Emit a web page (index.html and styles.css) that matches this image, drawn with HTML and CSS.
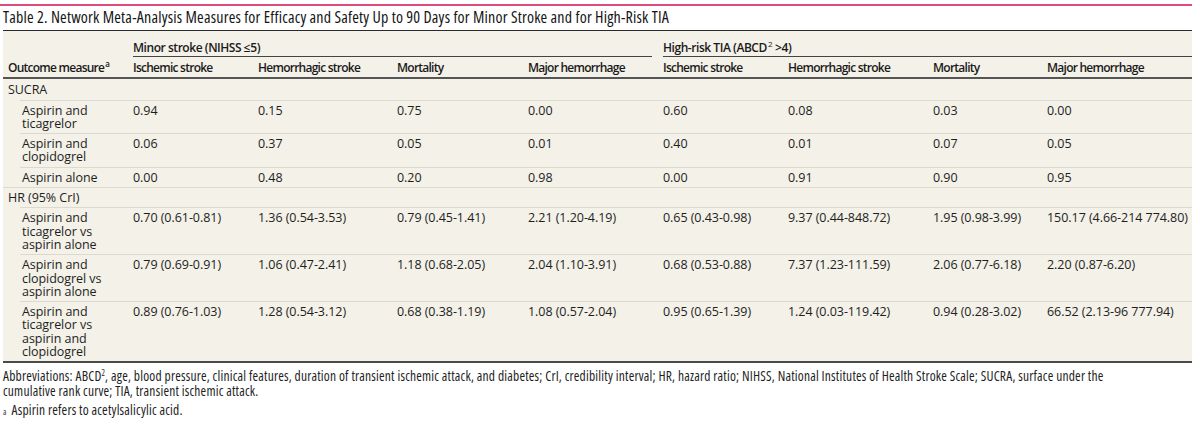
FILE: index.html
```html
<!DOCTYPE html>
<html lang="en">
<head>
<meta charset="utf-8">
<title>Table 2</title>
<link rel="stylesheet" href="styles.css">
</head>
<body>
<div class="page">
  <div class="rule"></div>
  <h1 class="title">Table 2. Network Meta-Analysis Measures for Efficacy and Safety Up to 90 Days for Minor Stroke and for High-Risk TIA</h1>
  <table class="data">
    <colgroup>
      <col class="w0"><col class="w1"><col class="w2"><col class="w3"><col class="w4"><col class="w5"><col class="w6"><col class="w7"><col class="w8">
    </colgroup>
    <thead>
      <tr class="groups">
        <th rowspan="2" class="outcome">Outcome measure<sup>a</sup></th>
        <th colspan="4" class="group"><div class="group-label">Minor stroke (NIHSS ≤5)</div></th>
        <th colspan="4" class="group last"><div class="group-label">High-risk TIA (ABCD<sup class="sq">2</sup> &gt;4)</div></th>
      </tr>
      <tr class="cols">
        <th>Ischemic stroke</th>
        <th>Hemorrhagic stroke</th>
        <th>Mortality</th>
        <th>Major hemorrhage</th>
        <th>Ischemic stroke</th>
        <th>Hemorrhagic stroke</th>
        <th>Mortality</th>
        <th>Major hemorrhage</th>
      </tr>
    </thead>
    <tbody>
      <tr class="cat"><td colspan="9">SUCRA</td></tr>
      <tr class="sub">
        <td>Aspirin and ticagrelor</td><td>0.94</td><td>0.15</td><td>0.75</td><td>0.00</td><td>0.60</td><td>0.08</td><td>0.03</td><td>0.00</td>
      </tr>
      <tr class="sub">
        <td>Aspirin and clopidogrel</td><td>0.06</td><td>0.37</td><td>0.05</td><td>0.01</td><td>0.40</td><td>0.01</td><td>0.07</td><td>0.05</td>
      </tr>
      <tr class="sub">
        <td>Aspirin alone</td><td>0.00</td><td>0.48</td><td>0.20</td><td>0.98</td><td>0.00</td><td>0.91</td><td>0.90</td><td>0.95</td>
      </tr>
      <tr class="cat sep"><td colspan="9">HR (95% CrI)</td></tr>
      <tr class="sub">
        <td>Aspirin and ticagrelor vs aspirin alone</td><td>0.70 (0.61-0.81)</td><td>1.36 (0.54-3.53)</td><td>0.79 (0.45-1.41)</td><td>2.21 (1.20-4.19)</td><td>0.65 (0.43-0.98)</td><td>9.37 (0.44-848.72)</td><td>1.95 (0.98-3.99)</td><td>150.17 (4.66-214 774.80)</td>
      </tr>
      <tr class="sub">
        <td>Aspirin and clopidogrel vs aspirin alone</td><td>0.79 (0.69-0.91)</td><td>1.06 (0.47-2.41)</td><td>1.18 (0.68-2.05)</td><td>2.04 (1.10-3.91)</td><td>0.68 (0.53-0.88)</td><td>7.37 (1.23-111.59)</td><td>2.06 (0.77-6.18)</td><td>2.20 (0.87-6.20)</td>
      </tr>
      <tr class="sub">
        <td>Aspirin and ticagrelor vs aspirin and clopidogrel</td><td>0.89 (0.76-1.03)</td><td>1.28 (0.54-3.12)</td><td>0.68 (0.38-1.19)</td><td>1.08 (0.57-2.04)</td><td>0.95 (0.65-1.39)</td><td>1.24 (0.03-119.42)</td><td>0.94 (0.28-3.02)</td><td>66.52 (2.13-96 777.94)</td>
      </tr>
    </tbody>
  </table>
  <div class="notes">
    <p class="abbr">Abbreviations: ABCD<sup class="sq">2</sup>, age, blood pressure, clinical features, duration of transient ischemic attack, and diabetes; CrI, credibility interval; HR, hazard ratio; NIHSS, National Institutes of Health Stroke Scale; SUCRA, surface under the<br>cumulative rank curve; TIA, transient ischemic attack.</p>
    <p class="fn"><sup class="mark">a</sup><span>Aspirin refers to acetylsalicylic acid.</span></p>
  </div>
</div>
</body>
</html>
```
FILE: styles.css
```css
html, body {
  margin: 0;
  padding: 0;
  background: #ffffff;
}

body {
  font-family: "Open Sans", "Liberation Sans", Arial, sans-serif;
  color: #1e1e1e;
}

.page {
  width: 1192px;
  padding-top: 4px;
}

.rule {
  height: 2px;
  background: #e04a7b;
}

.title {
  margin: 0 0 4px 3px;
  padding-top: 3px;
  font-size: 16px;
  font-stretch: 75%;
  letter-spacing: 0.2px;
  line-height: 17px;
  font-weight: 500;
  color: #151515;
}

.data {
  margin-left: 3px;
  width: 1189px;
  table-layout: fixed;
  border-collapse: separate;
  border-spacing: 0;
  background: #f3f1e8;
  border-top: 1px solid #2a2a2a;
  border-bottom: 2px solid #4a4a4a;
  font-size: 12.5px;
  letter-spacing: -0.05px;
  line-height: 13.3px;
}

.w0 { width: 125px; }
.w1 { width: 125px; }
.w2 { width: 139px; }
.w3 { width: 131px; }
.w4 { width: 135px; }
.w5 { width: 125px; }
.w6 { width: 145px; }
.w7 { width: 114px; }
.w8 { width: 150px; }

.data th {
  text-align: left;
  font-size: 12px;
  letter-spacing: -0.75px;
  font-weight: 600;
  color: #1a1a1a;
  padding: 4px 6px 3px 5px;
  vertical-align: bottom;
  white-space: nowrap;
}

.groups .group {
  padding: 10px 6px 0 5px;
  letter-spacing: -0.45px;
}

.groups .group.last {
  padding-right: 0;
}

.group-label {
  padding-bottom: 1.7px;
  border-bottom: 1px solid #444;
}

.outcome,
.cols th {
  border-bottom: 2px solid #555;
}

.data sup {
  font-size: 8px;
  letter-spacing: 0;
  line-height: 0;
  vertical-align: 5px;
  margin-left: 1px;
}

.data sup.sq {
  font-weight: normal;
}

.data td {
  padding: 4px 6px 3px 5px;
  vertical-align: top;
  white-space: nowrap;
}

.sub td {
  background-image: linear-gradient(#dcd9cf, #dcd9cf);
  background-repeat: no-repeat;
  background-size: 100% 1px;
  background-position: 0 0;
}

.sub td:first-child {
  white-space: normal;
  padding-left: 19px;
  padding-right: 20px;
  background-position: 17px 0;
}

.cat.sep td {
  background-image: linear-gradient(#dcd9cf, #dcd9cf);
  background-repeat: no-repeat;
  background-size: 100% 1px;
}

.notes {
  padding: 6px 0 0 3px;
  font-size: 13.5px;
  font-stretch: 75%;
  letter-spacing: 0.2px;
  line-height: 15px;
  color: #1e1e1e;
}

.notes p {
  margin: 0;
}

.notes sup.sq {
  font-size: 8px;
  line-height: 0;
  vertical-align: 5px;
}

.fn {
  margin-top: 4px !important;
  display: flex;
  align-items: baseline;
  gap: 5px;
}

.fn .mark {
  font-size: 8px;
  line-height: 0;
  vertical-align: 5px;
}
```
